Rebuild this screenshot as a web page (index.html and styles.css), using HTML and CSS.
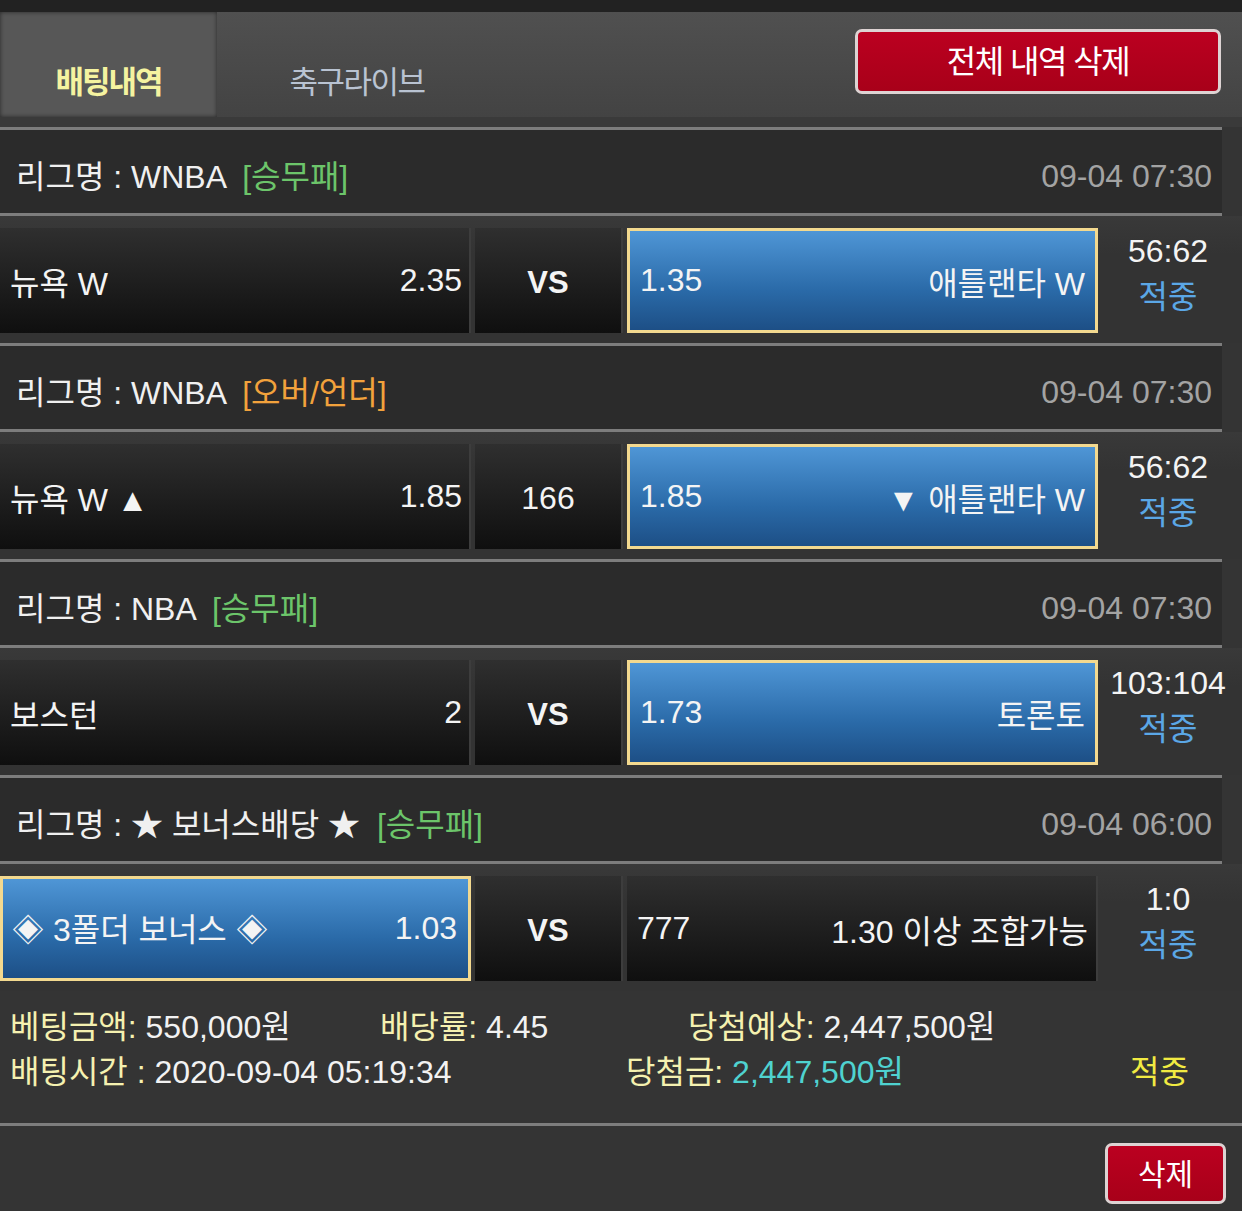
FILE: index.html
```html
<!DOCTYPE html>
<html lang="ko">
<head>
<meta charset="utf-8">
<title>배팅내역</title>
<link rel="stylesheet" href="styles.css">
</head>
<body>
<div class="top-bar"></div>
<div class="tabs">
  <div class="tab tab-active">배팅내역</div>
  <div class="tab">축구라이브</div>
  <div class="tabs-fill">
    <button class="btn-red btn-all">전체 내역 삭제</button>
  </div>
</div>
<div class="list">
  <div class="league">
    <div class="league-name">리그명 : WNBA <span class="tag tag-green">[승무패]</span></div>
    <div class="league-date">09-04 07:30</div>
  </div>
  <div class="match">
    <div class="cell"><span>뉴욕 W</span><span>2.35</span></div>
    <div class="cell cell-mid vs">VS</div>
    <div class="cell cell-sel"><span>1.35</span><span>애틀랜타 W</span></div>
    <div class="result"><span class="score">56:62</span><span class="hit">적중</span></div>
  </div>

  <div class="league">
    <div class="league-name">리그명 : WNBA <span class="tag tag-orange">[오버/언더]</span></div>
    <div class="league-date">09-04 07:30</div>
  </div>
  <div class="match">
    <div class="cell"><span>뉴욕 W ▲</span><span>1.85</span></div>
    <div class="cell cell-mid">166</div>
    <div class="cell cell-sel"><span>1.85</span><span>▼ 애틀랜타 W</span></div>
    <div class="result"><span class="score">56:62</span><span class="hit">적중</span></div>
  </div>

  <div class="league">
    <div class="league-name">리그명 : NBA <span class="tag tag-green">[승무패]</span></div>
    <div class="league-date">09-04 07:30</div>
  </div>
  <div class="match">
    <div class="cell"><span>보스턴</span><span>2</span></div>
    <div class="cell cell-mid vs">VS</div>
    <div class="cell cell-sel"><span>1.73</span><span>토론토</span></div>
    <div class="result"><span class="score">103:104</span><span class="hit">적중</span></div>
  </div>

  <div class="league">
    <div class="league-name">리그명 : ★ 보너스배당 ★ <span class="tag tag-green">[승무패]</span></div>
    <div class="league-date">09-04 06:00</div>
  </div>
  <div class="match">
    <div class="cell cell-sel cell-sel-left"><span>◈ 3폴더 보너스 ◈</span><span>1.03</span></div>
    <div class="cell cell-mid vs">VS</div>
    <div class="cell cell-right"><span>777</span><span>1.30 이상 조합가능</span></div>
    <div class="result"><span class="score">1:0</span><span class="hit">적중</span></div>
  </div>
</div>

<div class="summary">
  <div class="sum-row">
    <div class="sum-item sum-a"><span class="lbl">베팅금액:</span> 550,000원</div>
    <div class="sum-item sum-b"><span class="lbl">배당률:</span> 4.45</div>
    <div class="sum-item sum-c"><span class="lbl">당첨예상:</span> 2,447,500원</div>
  </div>
  <div class="sum-row">
    <div class="sum-item sum-d"><span class="lbl">배팅시간 :</span> 2020-09-04 05:19:34</div>
    <div class="sum-item sum-e"><span class="lbl">당첨금:</span> <span class="won">2,447,500원</span></div>
    <div class="sum-item sum-f">적중</div>
  </div>
</div>
<div class="footer">
  <button class="btn-red btn-del">삭제</button>
</div>
</body>
</html>
```
FILE: styles.css
```css
* { box-sizing: border-box; }
html, body {
  margin: 0;
  padding: 0;
  background: #343434;
  color: #f2f2f2;
  font-family: "Liberation Sans", Arial, "Noto Sans CJK KR", sans-serif;
  font-size: 32px;
}
.top-bar {
  height: 12px;
  background: #222;
}
.tabs {
  display: flex;
  height: 115px;
  background: linear-gradient(#505050, #434343);
  border-bottom: 10px solid #3a3a3a;
}
.tab {
  width: 217px;
  display: flex;
  align-items: center;
  justify-content: center;
  padding-top: 30px;
  font-size: 31px;
  color: #b9c3d2;
  letter-spacing: -1.5px;
}
.tab-active {
  background: #575757;
  color: #f5f3a0;
  font-weight: bold;
  letter-spacing: -2px;
  box-shadow: inset 0 0 4px rgba(0,0,0,0.55);
}
.tab + .tab {
  width: 280px;
}
.tabs-fill {
  flex: 1;
  display: flex;
  justify-content: flex-end;
  align-items: flex-start;
  padding: 17px 21px 0 0;
}
.btn-red {
  font-family: "Liberation Sans", "Noto Sans CJK KR", sans-serif;
  background: linear-gradient(#bb0020, #a80019);
  color: #fff;
  border: 3px solid #ddd3d3;
  border-radius: 7px;
  cursor: pointer;
  padding: 0;
}
.btn-all {
  width: 366px;
  height: 65px;
  font-size: 32px;
  letter-spacing: -1.5px;
  padding-bottom: 6px;
}
.list {
  background: #343434;
}
.league {
  width: 1222px;
  height: 89px;
  border-top: 3px solid #7d7d7d;
  border-bottom: 3px solid #7d7d7d;
  background: #2b2b2b;
  display: flex;
  align-items: center;
  justify-content: space-between;
  padding: 5px 10px 0 16px;
}
.league-name {
  color: #f0f0f0;
}
.tag { margin-left: 8px; }
.tag-green { color: #6cc56a; }
.tag-orange { color: #f2a23c; }
.league-date {
  color: #a3a3a3;
  padding-top: 5px;
}
.match {
  display: grid;
  grid-template-columns: 471px 148px 471px 1fr;
  column-gap: 4px;
  padding: 12px 0 10px;
  background: linear-gradient(#393939, #333 30%);
}
.cell {
  height: 105px;
  display: flex;
  align-items: center;
  justify-content: space-between;
  padding: 0 7px 0 10px;
  background: linear-gradient(#2f2f2f, #0f0f0f);
  border-right: 2px solid #3d3d3d;
  color: #f4f4f4;
}
.cell-mid {
  justify-content: center;
  padding: 4px 0 0;
}
.vs {
  font-weight: bold;
  font-size: 31px;
}
.cell-right {
  padding: 0 8px 0 10px;
}
.cell-sel {
  background: linear-gradient(#4f96d6, #2a6aa8 60%, #1d4f86);
  border: 3px solid #f3d98f;
  padding: 0 10px 0 10px;
}
.cell-sel-left {
  padding: 0 11px 0 9px;
}
.result {
  display: flex;
  flex-direction: column;
  align-items: center;
  line-height: 46px;
  margin-left: -8px;
  white-space: nowrap;
}
.score { color: #f4f4f4; }
.hit { color: #5ba7e6; }
.summary {
  height: 135px;
  padding: 10px 0 0 10px;
  border-bottom: 3px solid #7d7d7d;
  background: #343434;
}
.sum-row {
  display: flex;
  height: 45px;
  align-items: center;
}
.lbl { color: #f5f1b0; }
.sum-a { width: 370px; }
.sum-b { width: 308px; }
.sum-d { width: 616px; }
.sum-e { width: 504px; }
.won { color: #4fd2d0; }
.sum-f { color: #f1ea42; }
.footer {
  height: 86px;
  display: flex;
  justify-content: flex-end;
  align-items: flex-start;
  padding: 17px 16px 0 0;
}
.btn-del {
  width: 121px;
  height: 61px;
  font-size: 30px;
  padding-bottom: 4px;
}
```
